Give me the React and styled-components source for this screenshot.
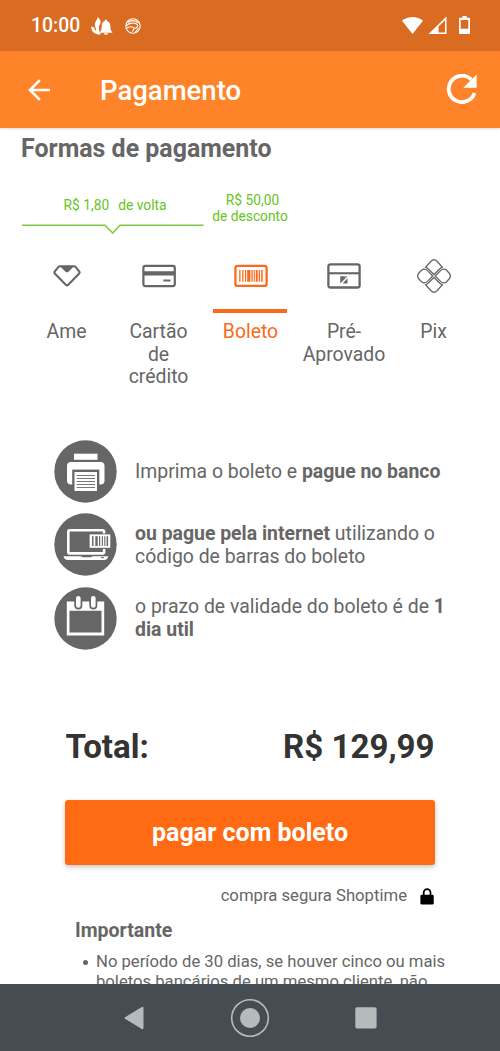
import React from "react";
import styled, { createGlobalStyle, css } from "styled-components";

const App = () => {
  return (
    <Screen>
      <GlobalStyle />
      <StatusBar>
        <Clock>10:00</Clock>
        <AlertIcon />
        <FaceIcon />
        <Spacer />
        <SystemIcons />
      </StatusBar>
      <TopBar>
        <BackIcon />
        <TopTitle>Pagamento</TopTitle>
        <ReloadIcon />
      </TopBar>
      <Content>
        <Heading>Formas de pagamento</Heading>
        <Offers>
          <Cashback>
            <OfferText>
              <span>R$ 1,80</span>
              <span>de volta</span>
            </OfferText>
            <OfferLine />
          </Cashback>
          <Discount>
            <DiscountValue>R$ 50,00</DiscountValue>
            <div>de desconto</div>
          </Discount>
        </Offers>
        <Tabs>
          {tabs.map(({ label, Icon, active }) => (
            <Tab key={label} $active={active}>
              <TabIcon $active={active}>
                <Icon />
              </TabIcon>
              <TabLabel>{label}</TabLabel>
            </Tab>
          ))}
        </Tabs>
        <Steps>
          <Step>
            <PrinterIcon />
            <StepText>
              Imprima o boleto e <b>pague no banco</b>
            </StepText>
          </Step>
          <Step>
            <LaptopIcon />
            <StepText>
              <b>ou pague pela internet</b> utilizando o<br />
              código de barras do boleto
            </StepText>
          </Step>
          <Step>
            <CalendarIcon />
            <StepText>
              o prazo de validade do boleto é de <b>1</b>
              <br />
              <b>dia util</b>
            </StepText>
          </Step>
        </Steps>
        <Total>
          <span>Total:</span>
          <span>R$ 129,99</span>
        </Total>
        <PayButton>pagar com boleto</PayButton>
        <Secure>
          compra segura Shoptime
          <LockIcon />
        </Secure>
        <Notice>
          <NoticeTitle>Importante</NoticeTitle>
          <NoticeItem>
            No período de 30 dias, se houver cinco ou mais
            <br />
            boletos bancários de um mesmo cliente, não
          </NoticeItem>
        </Notice>
      </Content>
      <NavBar>
        <svg width="20" height="24" viewBox="0 0 20 24">
          <path d="M1 11.2 17.8 1Q19.5 0.3 19.5 2V22Q19.5 23.6 17.8 23L1 12.8Q0 12 1 11.2Z" fill="#b4bbbd" />
        </svg>
        <svg width="40" height="40" viewBox="0 0 40 40">
          <circle cx="20" cy="20" r="18.3" fill="none" stroke="#b4bbbd" strokeWidth="1.6" />
          <circle cx="20" cy="20" r="10" fill="#b4bbbd" />
        </svg>
        <svg width="22" height="22" viewBox="0 0 22 22">
          <rect x="0.3" y="0.3" width="21.3" height="21.3" rx="1.8" fill="#b4bbbd" />
        </svg>
      </NavBar>
    </Screen>
  );
};

export default App;

/* status bar and header icons */

const AlertIcon = () => (
  <svg width="22" height="18" viewBox="0 0 22 18" fill="#fff">
    <path d="M6.8 0C8 1.6 9.8 3 9.6 5.2 9.400 7 8.300 7.800 8 9.200 7.600 11 8.400 12.400 8.200 13.800L9.800 17.200C4.300 18.400 0.200 15 0.200 9.600L3.400 10.600C3.200 12 4 13.400 5.200 13.600 5.400 11.600 3.800 10 3.800 7.200 3.900 4.400 6.400 3 6.800 0Z" />
    <path d="M14.8 2.8C15.5 2.8 16 3.3 16 4 18.3 4.6 19.2 6.6 19.3 8.8L19.7 13 21.3 15.2V15.8H8.9V15.2L10.4 13 10.7 8.8C10.8 6.6 11.8 4.6 13.7 4 13.7 3.3 14.1 2.8 14.8 2.8ZM12.9 16.3H17.2C17 17.3 16.2 17.8 15 17.8S13.1 17.3 12.9 16.3Z" />
  </svg>
);

const FaceIcon = () => (
  <svg width="16" height="16" viewBox="0 0 16 16" fill="none" stroke="#fff" strokeWidth="1.1">
    <circle cx="8" cy="8" r="7.2" />
    <path d="M2.500 4.500C6 2 10 2.200 13.600 5M1.200 8C3.800 4.800 8.500 4.200 12 6.300 13.500 8.700 11.500 10.700 8.800 10.200 7.700 8.300 5.500 8.300 2 10M13.500 10 10 14.600M9 10.400 7.500 13.500" />
  </svg>
);

const SystemIcons = () => (
  <svg width="69" height="20" viewBox="0 0 69 20" fill="#fff">
    <path d="M0 4.8C6 -0.2 15 -0.2 21 4.8L10.5 18Z" />
    <path d="M26.5 18 44.5 0.5V18ZM36.5 10.5V16.5H43V4.3Z" fillRule="evenodd" />
    <path d="M60.5 0H64.7V1.7H67.2Q68 1.7 68 2.5V17.2Q68 18 67.2 18H57.8Q57 18 57 17.2V2.5Q57 1.7 57.8 1.7H60.5ZM58.7 4V12.8H66.3V4Z" fillRule="evenodd" />
  </svg>
);

const BackIcon = () => (
  <svg width="23" height="22" viewBox="0 0 23 22" fill="none" stroke="#fff" strokeWidth="2.6">
    <path d="M22 11H2M11.8 1.2 2 11 11.8 20.8" />
  </svg>
);

const ReloadIcon = () => (
  <svg width="32" height="31" viewBox="0 0 32 31">
    <path d="M25.3 5.6A13.2 13.2 0 1 0 28.5 19" fill="none" stroke="#fff" strokeWidth="3.8" />
    <path d="M30.6 0.5V13.8H17.3Z" fill="#fff" />
  </svg>
);

/* payment method icons, drawn with the colour of their tab */

const AmeIcon = () => (
  <svg width="28" height="22" viewBox="0 0 28 22">
    <path d="M6.8 1.3H21.2Q22 1.3 22.6 1.9L26.3 6.7Q27 7.7 26.2 8.5L15 19.9Q14 20.8 13 19.9L1.8 8.5Q1 7.7 1.7 6.7L5.4 1.9Q6 1.3 6.8 1.3Z" fill="none" stroke="currentColor" strokeWidth="2.1" />
    <path d="M7 1.3H21L15.5 6.8Q14 7.9 12.500 6.800Z" fill="currentColor" />
  </svg>
);

const CardIcon = () => (
  <svg width="34" height="24" viewBox="0 0 34 24">
    <rect x="1.4" y="1.9" width="31.4" height="20.2" rx="2" fill="none" stroke="currentColor" strokeWidth="2.2" />
    <path d="M1 7.2H33V11.5H1ZM21.3 15.4H28.5V17.4H21.3Z" fill="currentColor" />
  </svg>
);

const BoletoIcon = () => (
  <svg width="34" height="24" viewBox="0 0 34 24">
    <rect x="1.4" y="1.9" width="31.2" height="20" rx="2.2" fill="none" stroke="currentColor" strokeWidth="2.3" />
    <path d="M5.2 6H6.5V17.8H5.2ZM8.2 6H9.5V17.8H8.2ZM11 6H12.2V17.8H11ZM13.2 6H16.4V17.8H13.2ZM17.4 6H18.700V17.8H17.4ZM19.7 6H20.8V17.8H19.7ZM21.8 6H23.7V17.8H21.8ZM24.7 6H26.100V17.8H24.7ZM27.2 6H28.7V17.8H27.2Z" fill="currentColor" />
  </svg>
);

const PreApprovedIcon = () => (
  <svg width="34" height="26" viewBox="0 0 34 26">
    <rect x="1.4" y="1.3" width="31.2" height="23.2" rx="2" fill="none" stroke="currentColor" strokeWidth="2.3" />
    <path d="M1 9.2H33V11.3H1Z" fill="currentColor" />
    <path d="M13.3 13.3H18.5L13.3 19.4ZM20.5 15.2V20.5H15.6ZM19 13.2H20.5L13.3 20.5V19Z" fill="currentColor" />
  </svg>
);

const PixIcon = () => (
  <svg width="34" height="34" viewBox="0 0 34 34" fill="none" stroke="currentColor" strokeWidth="1.3">
    <path d="M8.6 8.2 14 2.200Q17 -0.600 20 2.200L25.400 8.200Q24 8.800 22.600 10L17 15.500 11.400 10Q10 8.800 8.600 8.200Z" />
    <path d="M8.6 25.800 14 31.800Q17 34.600 20 31.800L25.400 25.800Q24 25.200 22.600 24L17 18.500 11.400 24Q10 25.200 8.600 25.800Z" />
    <path d="M15.700 17 10.500 11.600Q7.400 8.700 4.500 11.300L1.900 14Q-0.600 17 1.900 20L4.500 22.700Q7.400 25.300 10.500 22.400Z" />
    <path d="M18.300 17 23.500 11.600Q26.600 8.700 29.500 11.300L32.100 14Q34.600 17 32.100 20L29.500 22.700Q26.600 25.300 23.500 22.400Z" />
  </svg>
);

const tabs = [
  { label: "Ame", Icon: AmeIcon },
  { label: "Cartão de crédito", Icon: CardIcon },
  { label: "Boleto", Icon: BoletoIcon, active: true },
  { label: "Pré-Aprovado", Icon: PreApprovedIcon },
  { label: "Pix", Icon: PixIcon },
];

/* round step icons */

const PrinterIcon = () => (
  <svg width="63" height="63" viewBox="0 0 63 63">
    <circle cx="31.5" cy="31.5" r="31.2" fill="#666" />
    <path d="M20 13.700H43.5V19.800H20Z" fill="#fff" />
    <path d="M17 22H46.5Q50.500 22 50.5 26V40.500Q50.500 44.500 46.500 44.500H17Q13 44.500 13 40.500V26Q13 22 17 22Z" fill="#fff" />
    <path d="M18.2 29.600H45.300V46H18.200Z" fill="#666" />
    <path d="M20.5 32H43V51H20.500Z" fill="#fff" />
    <path d="M22.7 35.5H41M22.7 38.500H41M22.7 41.500H41M22.7 44.500H41M22.7 47.500H41" stroke="#777" strokeWidth="1" />
  </svg>
);

const LaptopIcon = () => (
  <svg width="63" height="63" viewBox="0 0 63 63">
    <circle cx="31.5" cy="31.5" r="31.2" fill="#666" />
    <rect x="14.3" y="17.2" width="35.8" height="23.2" rx="1.5" fill="none" stroke="#fff" strokeWidth="2.6" />
    <path d="M9.5 43.2H27L28.5 44.2H37L38.5 43.2H54.3C54 45.5 52.5 47 50 47H14C11.5 47 9.9 45.5 9.5 43.2Z" fill="#fff" />
    <path d="M47 44.6H50" stroke="#666" />
    <path d="M34.7 20.5H57V36H34.7Z" fill="#666" />
    <path d="M35.6 21.4H56.3V34.8H35.6Z" fill="#fff" />
    <path d="M38 23.3H39.500V33H38ZM41.300 23.300H43.700V33H41.300ZM45 23.300H46.200V33H45ZM47.800 23.300H48.900V33H47.800ZM50.300 23.300H51.400V33H50.300ZM52.600 23.300H54.100V33H52.600Z" fill="#666" />
  </svg>
);

const CalendarIcon = () => (
  <svg width="63" height="63" viewBox="0 0 63 63">
    <circle cx="31.5" cy="31.5" r="31.2" fill="#666" />
    <path d="M12.8 14.5H50.2V48.5H12.8Z" fill="#fff" />
    <path d="M15.5 23.7H47.5V45.5H15.5Z" fill="#666" />
    <rect x="20.3" y="7" width="8" height="15.5" rx="4" fill="#666" />
    <rect x="35.3" y="7" width="8" height="15.5" rx="4" fill="#666" />
    <rect x="22" y="9" width="4.6" height="11.8" rx="2.3" fill="#fff" />
    <rect x="37" y="9" width="4.6" height="11.8" rx="2.3" fill="#fff" />
  </svg>
);

const OfferLine = () => (
  <svg width="182" height="10" viewBox="0 0 182 10" fill="none" stroke="#7cc83e" strokeWidth="1.5">
    <path d="M0 1.3H83L90.700 9 98 1.3H181.500" />
  </svg>
);

const LockIcon = () => (
  <svg width="14" height="17" viewBox="0 0 14 17">
    <path d="M3.7 8V4.5A3.4 3.4 0 0 1 10.5 4.5V8" fill="none" stroke="#000" strokeWidth="1.8" />
    <rect x="0.4" y="6.8" width="13.3" height="9.8" rx="1.4" />
  </svg>
);

const GlobalStyle = createGlobalStyle`
  body {
    margin: 0;
    background: #fff;
    font-family: Roboto, "Liberation Sans", sans-serif;
  }
`;

const Screen = styled.div`
  display: flex;
  flex-flow: column;
  width: 500px;
  height: 1051px;
  overflow: hidden;
  color: #666;
`;

const StatusBar = styled.div`
  display: flex;
  align-items: center;
  box-sizing: border-box;
  flex: 0 0 51px;
  padding: 0 29px 0 31px;
  background: #d96c20;
  svg {
    flex: none;
  }
`;

const Clock = styled.div`
  width: 60px;
  font-size: 19.4px;
  font-weight: 500;
  color: #fff;
  & + svg {
    margin-right: 12px;
  }
`;

const Spacer = styled.div`
  flex: 1;
`;

const TopBar = styled.div`
  display: flex;
  align-items: center;
  box-sizing: border-box;
  flex: 0 0 77px;
  padding: 0 22px 0 28px;
  background: #ff8429;
  box-shadow: 0 1px 2px rgba(0, 0, 0, 0.15);
`;

const TopTitle = styled.div`
  flex: 1;
  padding: 2px 0 0 49px;
  font-size: 27.5px;
  font-weight: 500;
  color: #fff;
`;

const Content = styled.div`
  flex: 1;
  min-height: 0;
  overflow: hidden;
`;

const Heading = styled.div`
  padding: 7px 0 0 21px;
  font-size: 24.95px;
  font-weight: 700;
  line-height: 28px;
`;

const Offers = styled.div`
  display: flex;
  height: 65px;
  padding: 28.5px 0 0 21.5px;
  box-sizing: border-box;
  font-size: 13.8px;
  line-height: 16px;
  color: #68c41c;
`;

const Cashback = styled.div`
  display: flex;
  flex-flow: column;
  gap: 11px;
  width: 182px;
  padding-top: 5px;
  svg {
    flex: none;
  }
`;

const OfferText = styled.div`
  display: flex;
  justify-content: center;
  gap: 9px;
  padding-left: 5px;
`;

const Discount = styled.div`
  width: 93px;
  text-align: center;
`;

const DiscountValue = styled.div`
  padding-left: 5px;
`;

const Tabs = styled.div`
  display: grid;
  grid-template-columns: 92px 92px 92px 95px 84px;
  height: 212px;
  padding: 20px 0 0 20px;
  box-sizing: border-box;
`;

const Tab = styled.div`
  display: flex;
  flex-flow: column;
  align-items: center;
  color: ${(props) => (props.$active ? "#fa6a1c" : "#666")};
`;

const TabIcon = styled.div`
  display: flex;
  justify-content: center;
  align-items: center;
  box-sizing: border-box;
  width: 74px;
  height: 65px;
  border-bottom: 4px solid transparent;
  padding-bottom: 6px;
  padding-left: 1px;
  ${(props) =>
    props.$active &&
    css`
      border-color: #fa6a1c;
    `}
`;

const TabLabel = styled.div`
  width: 74px;
  display: flex;
  justify-content: center;
  padding: 8px 0 0 1px;
  font-size: 19.4px;
  line-height: 22.7px;
  text-align: center;
`;

const Steps = styled.div`
  display: flex;
  flex-flow: column;
  gap: 10.5px;
  padding-left: 53.5px;
`;

const Step = styled.div`
  display: flex;
  align-items: center;
  gap: 18.5px;
  height: 63px;
  svg {
    position: relative;
    top: -0.5px;
  }
`;

const StepText = styled.div`
  padding-top: 1px;
  font-size: 19.42px;
  line-height: 22.7px;
  white-space: nowrap;
`;

const Total = styled.div`
  display: flex;
  justify-content: space-between;
  padding: 77px 65.5px 0;
  font-size: 33.1px;
  font-weight: 700;
  line-height: 40px;
  color: #333;
`;

const PayButton = styled.button`
  display: block;
  width: 369.5px;
  height: 65px;
  margin: 33px 0 0 65.3px;
  padding: 0;
  border: 0;
  border-radius: 3px;
  background: #ff6a13;
  box-shadow: 0 2px 5px rgba(0, 0, 0, 0.24);
  font-family: inherit;
  font-size: 25px;
  font-weight: 700;
  color: #fff;
`;

const Secure = styled.div`
  display: flex;
  justify-content: flex-end;
  align-items: center;
  gap: 12.5px;
  padding: 21px 66.5px 0 0;
  font-size: 16.7px;
  line-height: 20px;
`;

const Notice = styled.div`
  padding: 13px 0 0 75px;
  white-space: nowrap;
`;

const NoticeTitle = styled.div`
  font-size: 19.5px;
  font-weight: 700;
  line-height: 24px;
`;

const NoticeItem = styled.div`
  display: flex;
  padding-top: 9px;
  font-size: 16.67px;
  line-height: 19.7px;
  &::before {
    content: "";
    flex: none;
    width: 5px;
    height: 5px;
    margin: 8px 8.5px 0 7.5px;
    border-radius: 50%;
    background: #666;
  }
`;

const NavBar = styled.div`
  display: flex;
  align-items: center;
  justify-content: center;
  flex: 0 0 67px;
  gap: 86.5px;
  background: #454d52;
  svg:last-child {
    margin-left: -2px;
  }
`;
